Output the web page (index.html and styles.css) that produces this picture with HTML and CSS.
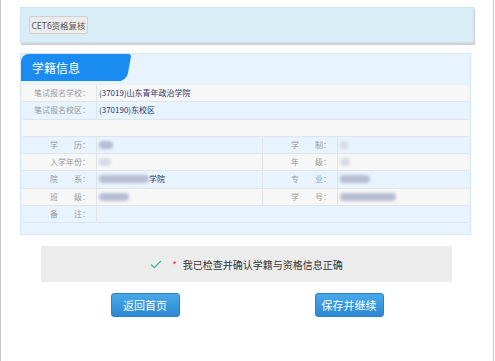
FILE: index.html
```html
<!DOCTYPE html>
<html lang="zh-CN">
<head>
    <meta charset="UTF-8">
    <title>学籍信息</title>
    <link rel="stylesheet" href="styles.css">
</head>
<body>

<div class="page">
    <div class="top-panel">
        <button class="btn-small">CET6资格复核</button>
    </div>

    <div class="info-panel">
        <div class="tab"><span>学籍信息</span></div>

        <div class="info-table">
            <div class="row gray wide">
                <div class="label">笔试报名学校：</div>
                <div class="value">(37019)山东青年政治学院</div>
            </div>
            <div class="row blue wide">
                <div class="label">笔试报名校区：</div>
                <div class="value">(370190)东校区</div>
            </div>
            <div class="row gray empty"></div>
            <div class="row blue">
                <div class="label">学　　历：</div>
                <div class="value"><i class="blur" style="width:14px"></i></div>
                <div class="label">学　　制：</div>
                <div class="value"><i class="blur light" style="width:8px"></i></div>
            </div>
            <div class="row gray">
                <div class="label">入学年份：</div>
                <div class="value"><i class="blur light" style="width:12px"></i></div>
                <div class="label">年　　级：</div>
                <div class="value"><i class="blur light" style="width:10px"></i></div>
            </div>
            <div class="row blue">
                <div class="label">院　　系：</div>
                <div class="value"><i class="blur" style="width:50px"></i><span>学院</span></div>
                <div class="label">专　　业：</div>
                <div class="value"><i class="blur" style="width:30px"></i></div>
            </div>
            <div class="row gray">
                <div class="label">班　　级：</div>
                <div class="value"><i class="blur" style="width:30px"></i></div>
                <div class="label">学　　号：</div>
                <div class="value"><i class="blur" style="width:56px"></i></div>
            </div>
            <div class="row blue wide">
                <div class="label">备　　注：</div>
                <div class="value"></div>
            </div>
        </div>
    </div>

    <div class="confirm-bar">
        <svg class="check" width="12" height="9" viewBox="0 0 12 9">
            <path d="M1 4.5 L4.2 7.6 L11 1" fill="none" stroke="#3fb3a8" stroke-width="1.3"/>
        </svg>
        <span class="star">*</span>
        <span>我已检查并确认学籍与资格信息正确</span>
    </div>

    <div class="actions">
        <button class="btn-blue">返回首页</button>
        <button class="btn-blue">保存并继续</button>
    </div>
</div>

</body>
</html>
```

FILE: styles.css
```css
body {
    margin: 0;
    font-family: "Noto Sans CJK SC", "Liberation Sans", sans-serif;
    background: #ffffff;
}
.page {
    width: 494px;
    height: 361px;
    box-sizing: border-box;
    padding-top: 7px;
    border-left: 1px solid #c8c8c8;
    border-right: 1px solid #c8c8c8;
}
.top-panel {
    margin-left: 19px;
    width: 444px;
    height: 26px;
    padding: 8px 0 0 8px;
    background: #d9edf7;
    border: 1px solid #c9e4f2;
    box-shadow: 1px 2px 1px #d2d2d2;
}
.btn-small {
    display: block;
    width: 59px;
    height: 18px;
    padding: 0;
    font-family: inherit;
    font-size: 8.5px;
    color: #555;
    background: #ececec;
    border: 1px solid #d0d0d0;
    border-radius: 2px;
}
.info-panel {
    margin: 10px 0 0 19px;
    width: 449px;
    padding-bottom: 11px;
    background: #e8f4fd;
    border: 1px solid #d3e8f8;
}
.tab {
    position: relative;
    width: 104px;
    height: 27px;
    margin-bottom: 4px;
}
.tab::before {
    content: "";
    position: absolute;
    left: 0;
    top: 0;
    width: 100px;
    height: 27px;
    background: #1a8bf0;
    border-radius: 8px 0 0 0;
}
.tab::after {
    content: "";
    position: absolute;
    left: 90px;
    top: 0;
    width: 18px;
    height: 27px;
    background: #1a8bf0;
    border-radius: 0 3px 8px 0;
    transform: skewX(-10deg);
}
.tab span {
    position: relative;
    z-index: 1;
    display: block;
    padding-left: 11px;
    line-height: 27px;
    color: #ffffff;
    font-size: 12px;
}
.info-table {
    margin-left: 1px;
    width: 447px;
}
.row {
    display: grid;
    grid-template-columns: 75px 166px 75px 1fr;
    height: 16.25px;
    border-bottom: 1px solid #dfe5ea;
    font-size: 8px;
    line-height: 16px;
}
.row.wide {
    grid-template-columns: 75px 1fr;
}
.row.gray {
    background: #f7f7f7;
}
.row.blue {
    background: #e8f4fd;
}
.label {
    text-align: right;
    padding-right: 6px;
    color: #999;
    border-right: 1px solid #e0e4e8;
}
.value {
    display: flex;
    align-items: center;
    padding-left: 2px;
    color: #2a3569;
    font-size: 8px;
    border-right: 1px solid #e0e4e8;
}
.value:last-child {
    border-right: none;
}
.blur {
    display: inline-block;
    height: 8px;
    background: #b7bdd2;
    border-radius: 4px;
    filter: blur(1.5px);
}
.blur.light {
    background: #d6dae4;
}
.confirm-bar {
    display: flex;
    align-items: center;
    justify-content: center;
    margin: 11px 0 0 40px;
    width: 411px;
    height: 36px;
    background: #ececec;
    font-size: 10px;
    color: #333;
}
.check {
    margin-right: 10px;
}
.star {
    margin-right: 6px;
    color: #e33;
    font-size: 10px;
}
.actions {
    display: flex;
    justify-content: center;
    gap: 135px;
    margin-top: 11px;
}
.btn-blue {
    width: 69px;
    height: 24px;
    padding: 0;
    font-family: inherit;
    font-size: 11px;
    color: #ffffff;
    background: linear-gradient(#47a9ea, #2c88d2);
    border: 1px solid #2f7fc2;
    border-radius: 3px;
}
```
